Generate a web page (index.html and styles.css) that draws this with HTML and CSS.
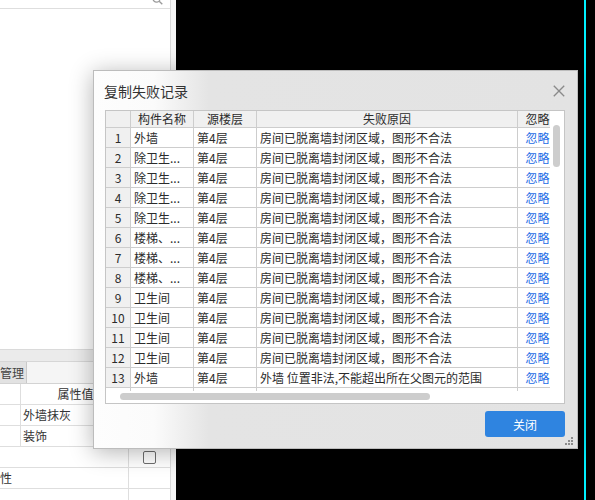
FILE: index.html
```html
<!DOCTYPE html>
<html lang="zh-CN">
<head>
<meta charset="utf-8">
<title>复制失败记录</title>
<link rel="stylesheet" href="styles.css">
</head>
<body>
<div class="desktop">
  <aside class="side">
    <div class="search">
      <svg class="search-icon" width="11" height="11" viewBox="0 0 11 11"><circle cx="4.5" cy="4.5" r="3.6" fill="none" stroke="#9a9a9a" stroke-width="1.2"/><line x1="7.2" y1="7.2" x2="10.3" y2="10.3" stroke="#9a9a9a" stroke-width="1.3"/></svg>
    </div>
    <div class="side-fill"></div>
    <div class="props">
      <div class="props-band"></div>
      <div class="props-tabs"><div class="tab"><span class="tab-text">管理</span></div></div>
      <div class="prow"><div class="c1"></div><div class="c2 center">属性值</div><div class="c3"></div></div>
      <div class="prow"><div class="c1"></div><div class="c2">外墙抹灰</div><div class="c3"></div></div>
      <div class="prow"><div class="c1"></div><div class="c2">装饰</div><div class="c3"></div></div>
      <div class="prow"><div class="c12"></div><div class="c3"><span class="checkbox"></span></div></div>
      <div class="prow"><div class="c12 flush">性</div><div class="c3"></div></div>
      <div class="prow"><div class="c12"></div><div class="c3"></div></div>
    </div>
  </aside>
  <div class="strip"></div>
  <div class="canvas"></div>
  <div class="cyan"></div>
  <div class="tail"></div>
</div>

<div class="dialog">
  <div class="dlg-title">
    <span class="dlg-caption">复制失败记录</span>
    <svg class="close" width="12" height="12" viewBox="0 0 12 12"><line x1="0.8" y1="0.8" x2="11.2" y2="11.2" stroke="#8a8a8a" stroke-width="1.3"/><line x1="11.2" y1="0.8" x2="0.8" y2="11.2" stroke="#8a8a8a" stroke-width="1.3"/></svg>
  </div>
  <div class="tbox">
    <div class="tmain">
      <div class="tview">
        <div class="trow thead"><div class="cell idx"></div><div class="cell center">构件名称</div><div class="cell center">源楼层</div><div class="cell center">失败原因</div><div class="cell center">忽略</div></div>
        <div class="trow"><div class="cell idx">1</div><div class="cell">外墙</div><div class="cell">第4层</div><div class="cell">房间已脱离墙封闭区域，图形不合法</div><div class="cell center link">忽略</div></div>
        <div class="trow"><div class="cell idx">2</div><div class="cell">除卫生...</div><div class="cell">第4层</div><div class="cell">房间已脱离墙封闭区域，图形不合法</div><div class="cell center link">忽略</div></div>
        <div class="trow"><div class="cell idx">3</div><div class="cell">除卫生...</div><div class="cell">第4层</div><div class="cell">房间已脱离墙封闭区域，图形不合法</div><div class="cell center link">忽略</div></div>
        <div class="trow"><div class="cell idx">4</div><div class="cell">除卫生...</div><div class="cell">第4层</div><div class="cell">房间已脱离墙封闭区域，图形不合法</div><div class="cell center link">忽略</div></div>
        <div class="trow"><div class="cell idx">5</div><div class="cell">除卫生...</div><div class="cell">第4层</div><div class="cell">房间已脱离墙封闭区域，图形不合法</div><div class="cell center link">忽略</div></div>
        <div class="trow"><div class="cell idx">6</div><div class="cell">楼梯、...</div><div class="cell">第4层</div><div class="cell">房间已脱离墙封闭区域，图形不合法</div><div class="cell center link">忽略</div></div>
        <div class="trow"><div class="cell idx">7</div><div class="cell">楼梯、...</div><div class="cell">第4层</div><div class="cell">房间已脱离墙封闭区域，图形不合法</div><div class="cell center link">忽略</div></div>
        <div class="trow"><div class="cell idx">8</div><div class="cell">楼梯、...</div><div class="cell">第4层</div><div class="cell">房间已脱离墙封闭区域，图形不合法</div><div class="cell center link">忽略</div></div>
        <div class="trow"><div class="cell idx">9</div><div class="cell">卫生间</div><div class="cell">第4层</div><div class="cell">房间已脱离墙封闭区域，图形不合法</div><div class="cell center link">忽略</div></div>
        <div class="trow"><div class="cell idx">10</div><div class="cell">卫生间</div><div class="cell">第4层</div><div class="cell">房间已脱离墙封闭区域，图形不合法</div><div class="cell center link">忽略</div></div>
        <div class="trow"><div class="cell idx">11</div><div class="cell">卫生间</div><div class="cell">第4层</div><div class="cell">房间已脱离墙封闭区域，图形不合法</div><div class="cell center link">忽略</div></div>
        <div class="trow"><div class="cell idx">12</div><div class="cell">卫生间</div><div class="cell">第4层</div><div class="cell">房间已脱离墙封闭区域，图形不合法</div><div class="cell center link">忽略</div></div>
        <div class="trow"><div class="cell idx">13</div><div class="cell">外墙</div><div class="cell">第4层</div><div class="cell">外墙 位置非法,不能超出所在父图元的范围</div><div class="cell center link">忽略</div></div>
        <div class="trow ghost"><div class="cell"></div><div class="cell"></div><div class="cell"></div><div class="cell"></div><div class="cell"></div></div>
      </div>
      <div class="hscroll"><div class="hthumb"></div></div>
    </div>
    <div class="vscroll"><div class="vthumb"></div></div>
  </div>
  <div class="dlg-foot"><button class="btn" type="button">关闭</button></div>
  <svg class="grip" width="9" height="8" viewBox="0 0 9 8"><g fill="#8c8c8c"><rect x="6" y="0" width="2" height="2"/><rect x="3" y="3" width="2" height="2"/><rect x="6" y="3" width="2" height="2"/><rect x="0" y="6" width="2" height="2"/><rect x="3" y="6" width="2" height="2"/><rect x="6" y="6" width="2" height="2"/></g></svg>
</div>
</body>
</html>
```

FILE: styles.css
```css
* { box-sizing: border-box; }

html, body {
  margin: 0;
  padding: 0;
  width: 595px;
  height: 500px;
  overflow: hidden;
  background: #000;
  font-family: "Noto Sans CJK SC", "Microsoft YaHei", "Noto Sans", sans-serif;
  font-size: 12px;
  color: #333;
}

.desktop {
  display: flex;
  height: 500px;
}

/* left side panel */
.side {
  width: 171px;
  flex: none;
  display: flex;
  flex-direction: column;
  background: #fff;
  border-right: 1px solid #d9d9d9;
}

.search {
  height: 9px;
  flex: none;
  border-bottom: 1px solid #dedede;
  overflow: hidden;
  display: flex;
  justify-content: flex-end;
  align-items: flex-end;
  padding: 0 7px 3px 0;
}

.search-icon { flex: none; display: block; }

.side-fill { flex: 1; }

.props {
  height: 151px;
  flex: none;
  overflow: hidden;
}

.props-band {
  height: 12px;
  background: #ebebeb;
  border-top: 1px solid #dadada;
}

.props-tabs {
  height: 23px;
  background: #f5f5f5;
  border-top: 1px solid #d6d6d6;
  border-bottom: 1px solid #d3d3d3;
  display: flex;
}

.tab {
  width: 27px;
  background: #e2e2e2;
  border-right: 1px solid #c9c9c9;
  overflow: hidden;
  line-height: 21px;
  white-space: nowrap;
}

.tab-text { margin-left: 0; color: #444; }

.prow {
  height: 21px;
  display: flex;
  border-bottom: 1px solid #dedede;
  line-height: 20px;
}

.c1 { width: 21px; border-right: 1px solid #dedede; }
.c2 { width: 108px; border-right: 1px solid #dedede; padding-left: 2px; white-space: nowrap; }
.c12 { width: 129px; border-right: 1px solid #dedede; padding-left: 2px; }
.c12.flush { padding-left: 0; }
.c3 { flex: 1; display: flex; align-items: center; justify-content: center; }
.center { text-align: center; }

.checkbox {
  width: 13px;
  height: 13px;
  border: 1px solid #6f6f6f;
  border-radius: 2px;
  background: #fff;
  margin-top: 1px;
}

.strip { width: 5px; flex: none; background: #f6f6f6; }
.canvas { flex: 1; background: #000; }
.cyan { width: 2px; flex: none; background: #00f0ff; }
.tail { width: 9px; flex: none; background: #000; }

/* dialog */
.dialog {
  position: absolute;
  left: 93px;
  top: 70px;
  width: 485px;
  height: 379px;
  border: 1px solid #bcbcbc;
  background: linear-gradient(90deg, #fdfdfd 0px, #fbfbfb 60px, #e4e4e4 115px, #e3e3e3 100%);
  box-shadow: 0 3px 22px rgba(0, 0, 0, 0.3);
  padding: 0 12px 0 11px;
  display: flex;
  flex-direction: column;
}

.dlg-title {
  height: 39px;
  flex: none;
  display: flex;
  align-items: center;
  justify-content: space-between;
}

.dlg-caption {
  margin-left: -1px;
  font-size: 14px;
  color: #333;
}

.close { display: block; }

.tbox {
  height: 294px;
  flex: none;
  display: flex;
  background: #fff;
  border: 1px solid #c5c5c5;
}

.tmain {
  width: 444px;
  flex: none;
  display: flex;
  flex-direction: column;
  overflow: hidden;
}

.tview {
  height: 280px;
  flex: none;
  overflow: hidden;
}

.trow {
  display: grid;
  grid-template-columns: 25px 63px 63px 261px 40px;
  height: 20px;
}

.cell {
  border-right: 1px solid #cdcdcd;
  border-bottom: 1px solid #cdcdcd;
  line-height: 19px;
  padding: 0 3px;
  white-space: nowrap;
  overflow: hidden;
  color: #2b2b2b;
}

.thead { height: 17px; }
.thead .cell { line-height: 16px; background: #f0f0f0; }

.idx { background: #f0f0f0; text-align: center; padding: 0; }

.link { color: #1e6de6; }

.ghost .cell { background: #fff; }

.hscroll {
  height: 12px;
  flex: none;
  padding: 2px 0 0 14px;
}

.hthumb {
  width: 310px;
  height: 7px;
  border-radius: 4px;
  background: #cdcdcd;
}

.vscroll {
  width: 14px;
  flex: none;
  padding: 14px 0 0 3px;
}

.vthumb {
  width: 7px;
  height: 42px;
  border-radius: 4px;
  background: #cdcdcd;
}

.dlg-foot {
  flex: 1;
  display: flex;
  justify-content: flex-end;
  align-items: flex-start;
  padding-top: 7px;
}

.btn {
  width: 80px;
  height: 26px;
  border: none;
  border-radius: 3px;
  background: #2f84e0;
  color: #fff;
  font-family: inherit;
  font-size: 12px;
  padding: 0;
}

.grip {
  position: absolute;
  right: 3px;
  bottom: 3px;
  display: block;
}
```
